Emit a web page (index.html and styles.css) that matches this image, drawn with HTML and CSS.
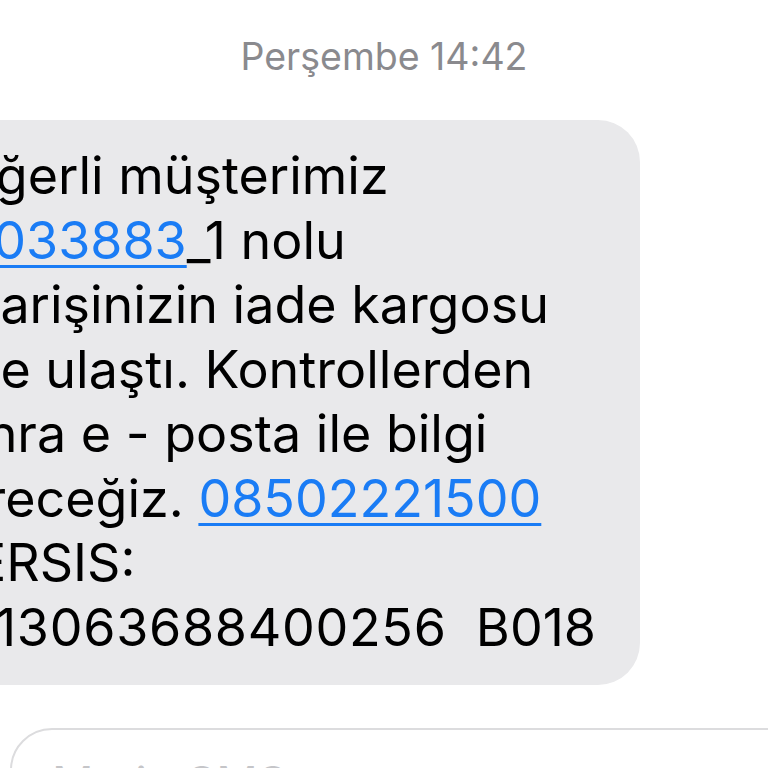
FILE: index.html
```html
<!DOCTYPE html>
<html lang="tr">
<head>
    <meta charset="UTF-8">
    <meta name="viewport" content="width=device-width, initial-scale=1.0">
    <title>Mesajlar</title>
    <link rel="stylesheet" href="styles.css">
</head>
<body>
    <div class="thread">
        <div class="stamp">Perşembe 14:42</div>
        <div class="bubble">
            <p class="message">Değerli müşterimiz <a href="#" class="link">45033883</a>_1 nolu siparişinizin iade kargosu bize ulaştı. Kontrollerden sonra e - posta ile bilgi vereceğiz. <a href="#" class="link">08502221500</a> MERSIS: <span class="code">0013063688400256</span>&nbsp;&nbsp;B018</p>
        </div>
        <div class="composer">
            <span class="placeholder">Metin SMS</span>
        </div>
    </div>
</body>
</html>
```

FILE: styles.css
```css
* {
    margin: 0px;
    padding: 0px;
    box-sizing: border-box;
}
body {
    width: 768px;
    height: 768px;
    overflow: hidden;
    background-color: white;
    font-family: "Inter", "Liberation Sans", sans-serif;
}
.thread {
    display: flex;
    flex-direction: column;
    padding-top: 32px;
}
.stamp {
    text-align: center;
    font-size: 37.5px;
    line-height: 50px;
    color: #8a8a8e;
}
.bubble {
    margin-top: 38px;
    margin-left: -74px;
    width: 714px;
    padding: 24px 30px 25px 2px;
    background-color: #e9e9eb;
    border-radius: 42px;
}
.message {
    font-size: 52px;
    line-height: 64.5px;
    color: black;
    width: 640px;
}
.link {
    color: #1a7cf5;
    text-decoration: underline;
    text-decoration-thickness: 3px;
    text-underline-offset: 6px;
}
.code {
    letter-spacing: 0.7px;
}
.composer {
    margin-top: 43px;
    margin-left: 10px;
    width: 800px;
    height: 120px;
    border: 2px solid #dcdcde;
    border-radius: 42px;
    padding: 25px 0px 0px 40px;
}
.placeholder {
    font-size: 46px;
    color: #c5c5c8;
}
```
